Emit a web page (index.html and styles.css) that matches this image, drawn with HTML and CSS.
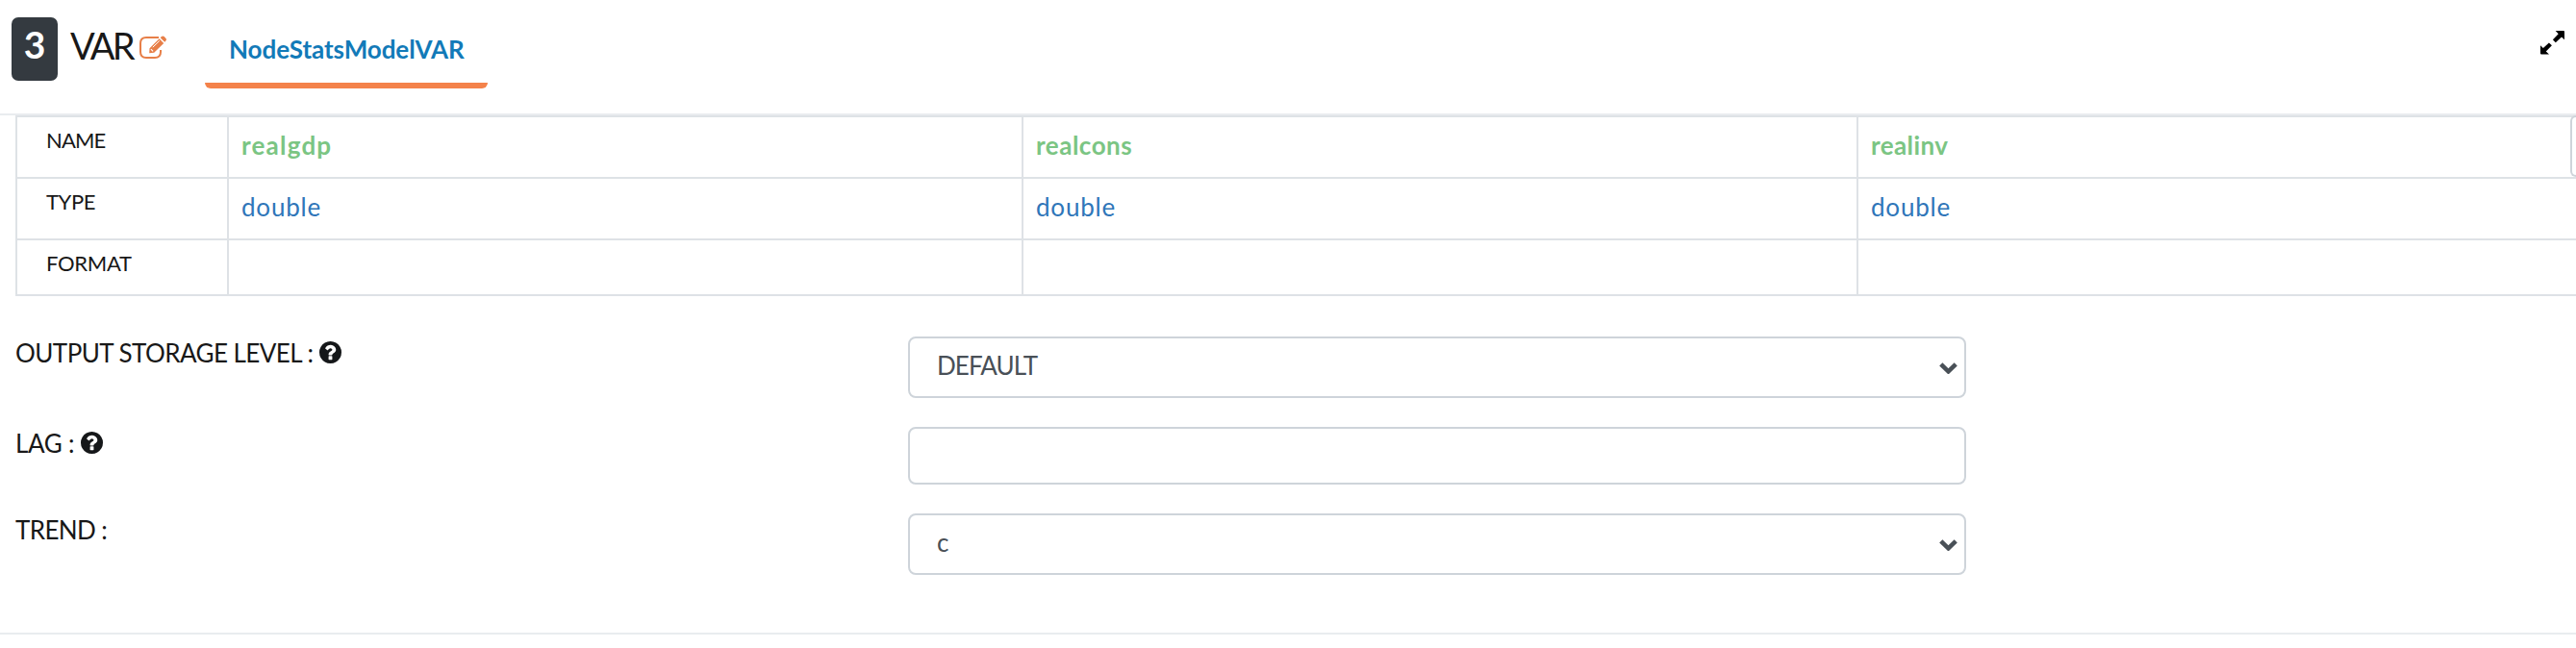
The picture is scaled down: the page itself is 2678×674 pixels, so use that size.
FILE: index.html
```
<!DOCTYPE html>
<html lang="en">
<head>
<meta charset="utf-8">
<title>VAR</title>
<link rel="stylesheet" href="styles.css">
</head>
<body>
<header class="header">
  <span class="badge">3</span>
  <h1 class="title">VAR</h1>
  <svg class="edit" viewBox="0 0 28 24" fill="none" stroke="#e77f48" stroke-width="2">
    <path d="M20 2H7Q1 2 1 8v9q0 6 6 6h9q6 0 6-6v-2"/>
    <path fill="#e77f48" stroke="none" d="M10.5 13.2 20.6 3.3l4.6 4.7-10 9.7-5 .5zM21.7 2.3l1.2-1.2q1.4-1.4 2.8 0l1.6 1.6q1.4 1.4 0 2.8l-1.1 1.2z"/>
    <path d="m13.8 12.2 7-6.8" stroke="#fff" stroke-width="1"/>
    <path d="m11.9 14.2 2.2 2.2" stroke="#fff" stroke-width="1.2"/>
  </svg>
  <nav class="tab"><span>NodeStatsModelVAR</span></nav>
  <svg class="expand" viewBox="0 0 25 25" fill="#000">
    <path d="M15.7 0H24q1 0 1 1v8.3l-3-2.8-6.2 5.7-2.9-2.9 5.8-6.1zM0 15.2l2.9 2.9 6-5.7 3 2.9-6.1 6.2L9 24.5H1q-1 0-1-1z"/>
  </svg>
</header>

<section class="schema">
  <div class="cell key name">NAME</div>
  <div class="cell field gdp">realgdp</div>
  <div class="cell field cons">realcons</div>
  <div class="cell field last inv"><span>realinv</span><i class="next"></i></div>
  <div class="cell key type">TYPE</div>
  <div class="cell kind">double</div>
  <div class="cell kind">double</div>
  <div class="cell kind last">double</div>
  <div class="cell key format">FORMAT</div>
  <div class="cell"></div>
  <div class="cell"></div>
  <div class="cell last"></div>
</section>

<form class="form">
  <div class="row">
    <div class="label"><span class="storage">OUTPUT STORAGE LEVEL :</span>
      <svg class="help" viewBox="128 128 1536 1536"><path d="M1024 1376v-192q0-14-9-23t-23-9h-192q-14 0-23 9t-9 23v192q0 14 9 23t23 9h192q14 0 23-9t9-23zm256-672q0-88-55.5-163t-138.5-116-170-41q-243 0-371 213-15 24 8 42l132 100q7 6 19 6 16 0 25-12 53-68 86-92 34-24 86-24 48 0 85.5 26t37.5 59q0 38-20 61t-68 45q-63 28-115.5 86.5t-52.5 125.5v36q0 14 9 23t23 9h192q14 0 23-9t9-23q0-19 21.5-49.5t54.5-49.5q32-18 49-28.5t46-35 44.5-48 28-60.5 12.5-81zm384 192q0 209-103 385.5t-279.5 279.5-385.5 103-385.5-103-279.5-279.5-103-385.5 103-385.5 279.5-279.5 385.5-103 385.5 103 279.5 279.5 103 385.5z"/></svg>
    </div>
    <div class="control"><span class="default">DEFAULT</span>
      <svg class="chevron" viewBox="0 0 19 12"><path d="M1.8 1.8 9.5 9.3l7.7-7.5"/></svg>
    </div>
  </div>
  <div class="row lag-row">
    <div class="label"><span class="lag">LAG :</span>
      <svg class="help" viewBox="128 128 1536 1536"><path d="M1024 1376v-192q0-14-9-23t-23-9h-192q-14 0-23 9t-9 23v192q0 14 9 23t23 9h192q14 0 23-9t9-23zm256-672q0-88-55.5-163t-138.5-116-170-41q-243 0-371 213-15 24 8 42l132 100q7 6 19 6 16 0 25-12 53-68 86-92 34-24 86-24 48 0 85.5 26t37.5 59q0 38-20 61t-68 45q-63 28-115.5 86.5t-52.5 125.5v36q0 14 9 23t23 9h192q14 0 23-9t9-23q0-19 21.5-49.5t54.5-49.5q32-18 49-28.5t46-35 44.5-48 28-60.5 12.5-81zm384 192q0 209-103 385.5t-279.5 279.5-385.5 103-385.5-103-279.5-279.5-103-385.5 103-385.5 279.5-279.5 385.5-103 385.5 103 279.5 279.5 103 385.5z"/></svg>
    </div>
    <div class="control"></div>
  </div>
  <div class="row">
    <div class="label"><span class="trend">TREND :</span></div>
    <div class="control"><span class="value">c</span>
      <svg class="chevron" viewBox="0 0 19 12"><path d="M1.8 1.8 9.5 9.3l7.7-7.5"/></svg>
    </div>
  </div>
</form>
</body>
</html>
```
FILE: styles.css
```
* { box-sizing: border-box; }
body {
  margin: 0;
  height: 674px;
  overflow: hidden;
  background: #fff;
  color: #181818;
  font-family: Lato, "Open Sans", sans-serif;
  font-size: 26px;
}
svg { display: block; flex: none; }

.header {
  display: flex;
  align-items: flex-start;
  height: 120px;
  padding: 18px 12px 0;
  border-bottom: 2px solid #e9ecef;
}
.badge {
  width: 48px;
  height: 66px;
  border-radius: 7px;
  background: #343a40;
  color: #fff;
  font-size: 39px;
  font-weight: 700;
  line-height: 57px;
  text-align: center;
}
.title {
  width: 71px;
  margin: 0 0 0 13px;
  font-size: 38px;
  font-weight: 400;
  line-height: 58px;
  letter-spacing: -2.8px;
  white-space: nowrap;
}
.edit { width: 28px; height: 24px; margin: 19px 0 0 1px; }
.tab {
  width: 294px;
  height: 74px;
  margin-left: 40px;
  padding-left: 25px;
  border-bottom: 6px solid #f4824a;
  border-radius: 0 0 6px 6px;
  color: #127ab8;
  font-weight: 700;
  line-height: 67px;
  letter-spacing: -0.05px;
  white-space: nowrap;
}
.expand { width: 25px; height: 25px; margin: 14px 0 0 auto; }

.schema {
  display: grid;
  grid-template-columns: 220px 826px 868px 1fr;
  grid-template-rows: 64px 64px 58px;
  margin-left: 16px;
  border-top: 2px solid #dee2e6;
  border-left: 2px solid #dee2e6;
}
.cell {
  padding-left: 13px;
  border-right: 2px solid #dee2e6;
  border-bottom: 2px solid #dee2e6;
  line-height: 58px;
  white-space: nowrap;
}
.last { border-right: 0; }
.key { padding-left: 30px; font-size: 22px; line-height: 48px; }
.name { letter-spacing: -0.9px; }
.type { letter-spacing: -0.4px; }
.format { letter-spacing: -0.3px; }
.field { color: #7bc583; font-weight: 700; }
.gdp { letter-spacing: 1.2px; }
.cons { letter-spacing: 0.5px; }
.inv { letter-spacing: 0.4px; }
.kind { color: #2f76b9; letter-spacing: 0.8px; }
.inv { display: flex; justify-content: space-between; }
.next {
  width: 6px;
  height: 64px;
  margin-top: -2px;
  border: 2px solid #ced4da;
  border-right: 0;
  border-radius: 8px 0 0 8px;
}

.form {
  display: flex;
  flex-direction: column;
  gap: 30px;
  height: 352px;
  padding: 42px 0 0 16px;
  border-bottom: 2px solid #e9ecef;
}
.row { display: flex; height: 64px; }
.lag-row { height: 60px; }
.label { display: flex; width: 928px; line-height: 34px; white-space: nowrap; }
.storage { letter-spacing: -0.55px; }
.lag { letter-spacing: -0.3px; }
.trend { letter-spacing: -0.6px; }
.help { width: 23px; height: 23px; margin: 5px 0 0 7px; fill: #151719; }
.control {
  display: flex;
  justify-content: space-between;
  width: 1100px;
  padding: 0 7px 0 28px;
  border: 2px solid #ced4da;
  border-radius: 8px;
  color: #495057;
  line-height: 56px;
}
.default { letter-spacing: -0.9px; }
.chevron { width: 19px; height: 12px; margin-top: 25px; fill: none; stroke: #495057; stroke-width: 4.6; }
```
